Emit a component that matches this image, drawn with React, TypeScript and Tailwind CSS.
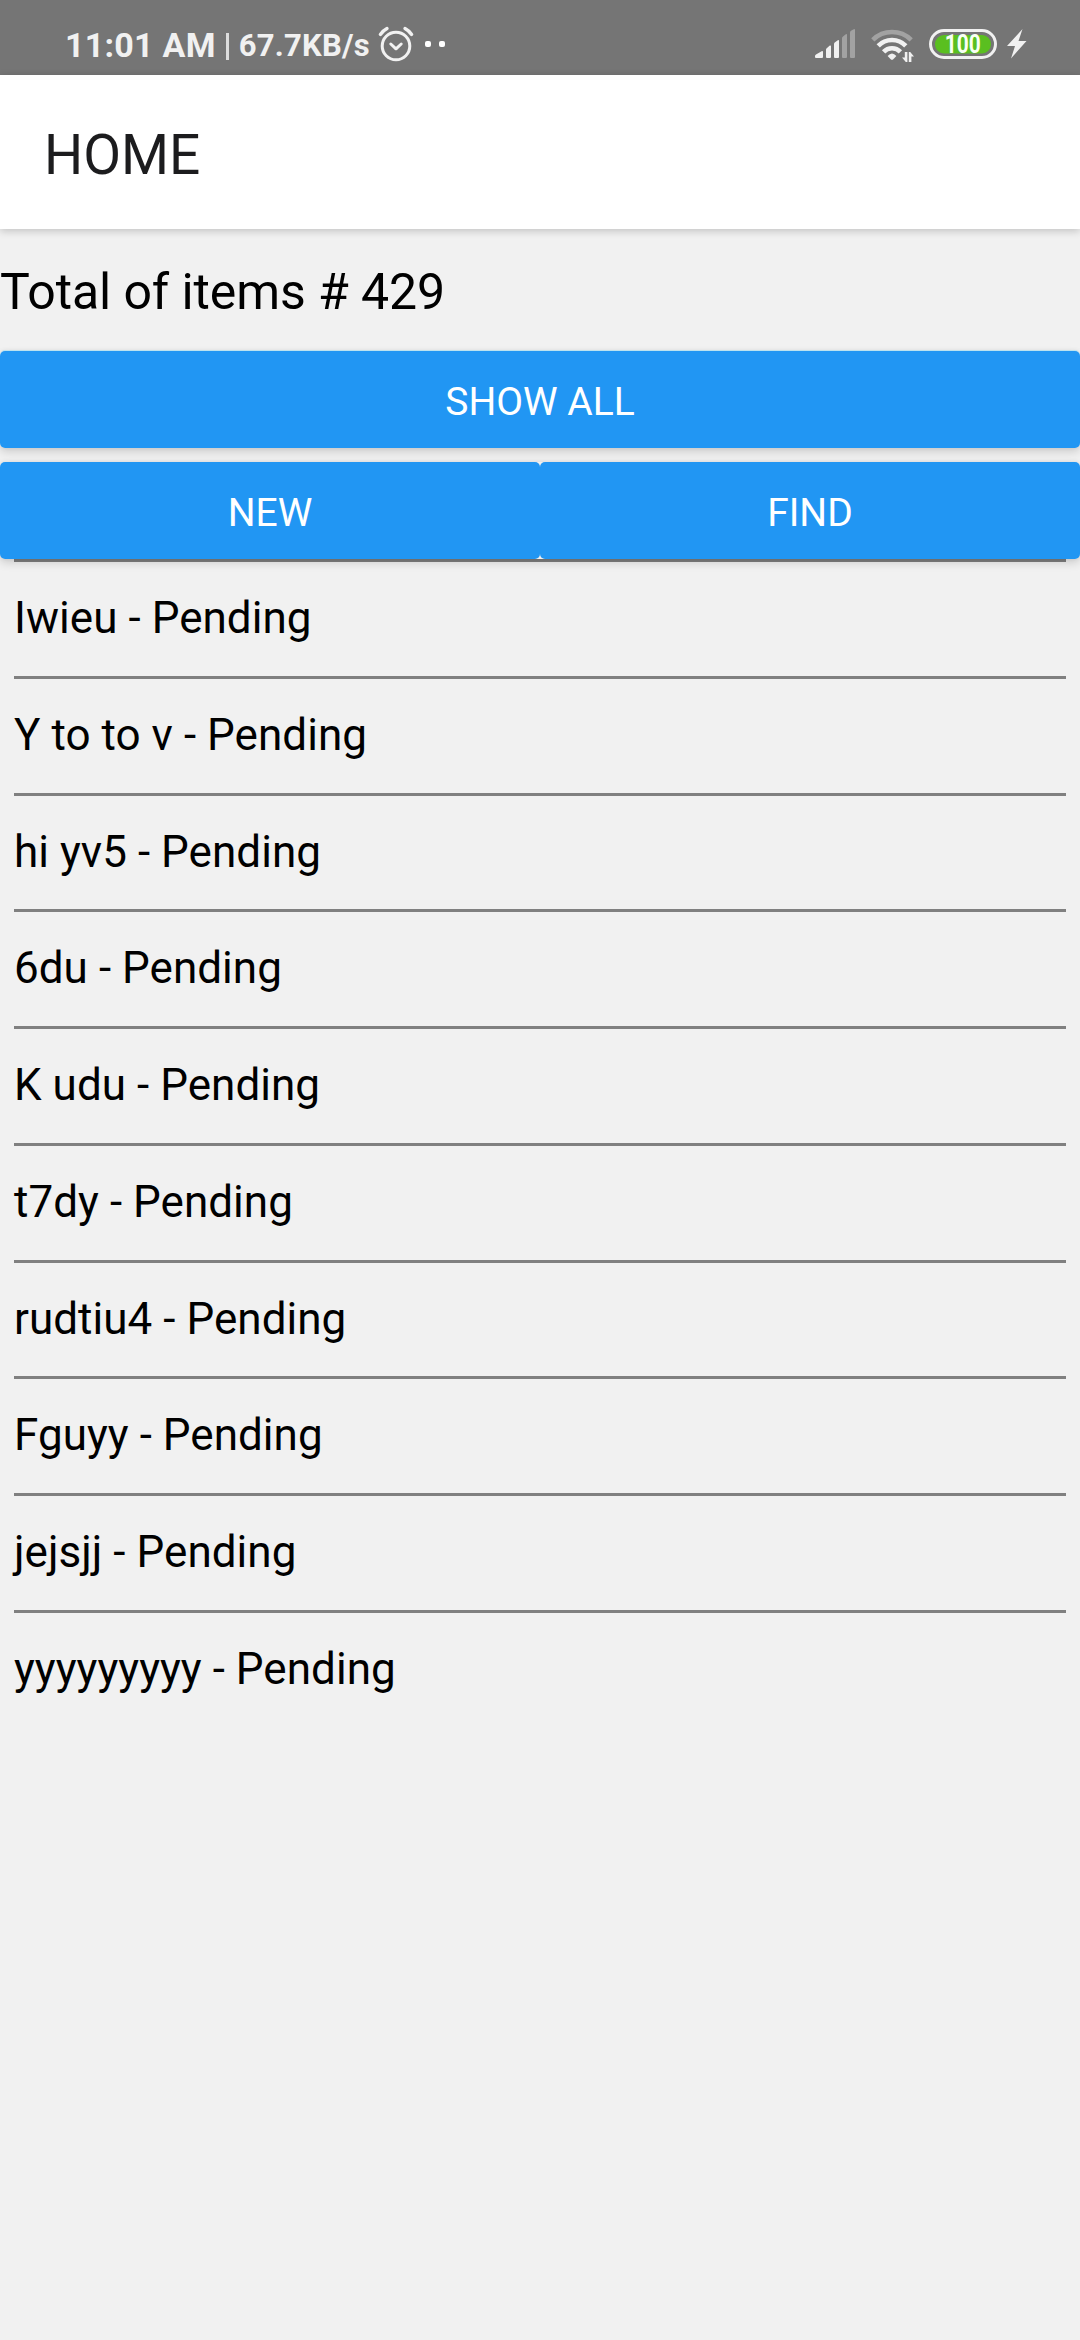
import React from "react";

const items = [
  "Iwieu",
  "Y to to v",
  "hi yv5",
  "6du",
  "K udu",
  "t7dy",
  "rudtiu4",
  "Fguyy",
  "jejsjj",
  "yyyyyyyyy",
];

function AlarmIcon() {
  return (
    <svg className="ml-[8px] h-[36px] w-[36px] shrink-0" viewBox="0 0 36 36" fill="none" stroke="#f1f1f1" strokeLinecap="round">
      <circle cx="18" cy="20" r="13.8" strokeWidth="3" />
      <path d="M12.8 18 L18 22.8 L23.2 18" strokeWidth="3" strokeLinejoin="round" />
      <path d="M2.4 8.4 Q5 4.8 9 2.6" strokeWidth="3.4" />
      <path d="M33.6 8.4 Q31 4.8 27 2.6" strokeWidth="3.4" />
    </svg>
  );
}

function SignalIcon() {
  return (
    <svg className="h-[30px] w-[41px] shrink-0" viewBox="0 0 41 30">
      <g fill="#f1f1f1">
        <path d="M0 27 Q0 26 1 25.5 L6.6 22.2 Q8 21.6 8 23 V28 Q8 29 7 29 H1 Q0 29 0 28Z" />
        <path d="M11 20.5 Q11 19.7 12 19 L14.8 16.6 Q16 16 16 17.2 V28 Q16 29 15 29 H12 Q11 29 11 28Z" />
        <path d="M19 15 Q19 14 20 13.2 L22.8 11.2 Q24 10.6 24 12 V28 Q24 29 23 29 H20 Q19 29 19 28Z" />
      </g>
      <g fill="#a2a2a2">
        <path d="M27 9.3 Q27 8.4 28 7.6 L30.8 5.3 Q32 4.7 32 6 V28 Q32 29 31 29 H28 Q27 29 27 28Z" />
        <path d="M35 3.5 Q35 2.6 36 1.8 L38.8 .2 Q40 -.3 40 1 V28 Q40 29 39 29 H36 Q35 29 35 28Z" />
      </g>
    </svg>
  );
}

function WifiIcon() {
  return (
    <svg className="ml-[15px] h-[34px] w-[43px] shrink-0" viewBox="0 0 43 34" fill="none" strokeWidth="4.6">
      <path d="M1.8 10.8 A27.5 27.5 0 0 1 40.2 10.8" stroke="#a2a2a2" />
      <path d="M7.2 16.8 A19.3 19.3 0 0 1 34.8 16.8" stroke="#f1f1f1" />
      <path d="M12.6 22.8 A11.6 11.6 0 0 1 29.4 22.8" stroke="#f1f1f1" />
      <path d="M16.6 27 Q21 22 25.4 27 L22.3 30.2 Q21 31.4 19.7 30.2Z" fill="#f1f1f1" />
      <path d="M36.4 23 V33 H34.8 L31 28.6 H33.8 V23Z M37.8 33 V23 H39.2 L43 27.6 H40.4 V33Z" fill="#f1f1f1" />
    </svg>
  );
}

function BatteryIcon() {
  return (
    <svg className="ml-[15px] h-[30px] w-[68px] shrink-0" viewBox="0 0 68 30">
      <rect x="1.5" y="1.5" width="65" height="27" rx="13.5" fill="none" stroke="#f1f1f1" strokeWidth="3" />
      <rect x="6" y="6" width="56" height="18.5" rx="9" fill="#5abf20" />
      <text x="15.8" y="24" textLength="36" lengthAdjust="spacingAndGlyphs" fill="#f8fff4" fontFamily="Roboto" fontSize="25" fontWeight="700">
        100
      </text>
    </svg>
  );
}

function BoltIcon() {
  return (
    <svg className="ml-[10px] h-[30px] w-[20px] shrink-0" viewBox="0 0 20 30">
      <path d="M15.5 0 L0 17 H8 L4 29.5 L19.5 12 H11.5Z" fill="#f1f1f1" />
    </svg>
  );
}

function StatusBar() {
  return (
    <div className="flex h-[75px] justify-between bg-[#757575] pl-[65px] pr-[53px] text-[#f1f1f1]">
      <div className="flex items-start pt-[26px]">
        <span className="whitespace-pre text-[34px] font-bold leading-[38px] tracking-[0.25px]">11:01 AM</span>
        <span className="ml-[10px] mt-[7px] h-[27px] w-[3px] bg-[#dcdcdc]" />
        <span className="ml-[10px] text-[31px] font-bold leading-[39px] tracking-[0.25px]">67.7KB/s</span>
        <AlarmIcon />
        <span className="ml-[11px] mt-[15px] h-[6px] w-[6px] rounded-[2px] bg-white" />
        <span className="ml-[8px] mt-[15px] h-[6px] w-[6px] rounded-[2px] bg-white" />
      </div>
      <div className="flex items-start pt-[29px]">
        <SignalIcon />
        <WifiIcon />
        <BatteryIcon />
        <BoltIcon />
      </div>
    </div>
  );
}

function ActionButton({ label }: { label: string }) {
  return (
    <button className="flex h-[97px] flex-1 items-center justify-center rounded-[5px] bg-[#2196f3] pt-[5px] text-[39px] leading-[46px] text-white">
      {label}
    </button>
  );
}

export default function App() {
  return (
    <div className="flex h-[2340px] w-[1080px] flex-col overflow-hidden bg-[#f1f1f1] font-['Roboto',sans-serif] text-black">
      <StatusBar />
      <header className="relative z-10 flex h-[154px] items-center bg-white pl-[44px] pt-[6px] shadow-[0_2px_8px_rgba(0,0,0,0.2)]">
        <h1 className="text-[55px] leading-[64px] text-[#1c1c1e]">HOME</h1>
      </header>
      <div className="flex h-[122px] items-center pt-[4px] text-[50px] leading-[58px] tracking-[-0.1px]">Total of items # 429</div>
      <div className="relative z-10 flex rounded-[5px] shadow-[0_-1px_0_#bde3ef,0_4px_10px_rgba(0,0,0,0.14),0_0_5px_rgba(0,0,0,0.08)]">
        <ActionButton label="SHOW ALL" />
      </div>
      <div className="relative z-10 mt-[14px] flex rounded-[5px] shadow-[0_4px_10px_rgba(0,0,0,0.14),0_0_5px_rgba(0,0,0,0.08)]">
        <ActionButton label="NEW" />
        <ActionButton label="FIND" />
      </div>
      <ul className="mx-[14px]">
        {items.map((name) => (
          <li key={name} className="flex h-[116.77px] items-center border-t-[3px] border-[#808080] pb-[1.5px] text-[44px] leading-[52px] tracking-[0.04px]">
            {name} - Pending
          </li>
        ))}
      </ul>
    </div>
  );
}
